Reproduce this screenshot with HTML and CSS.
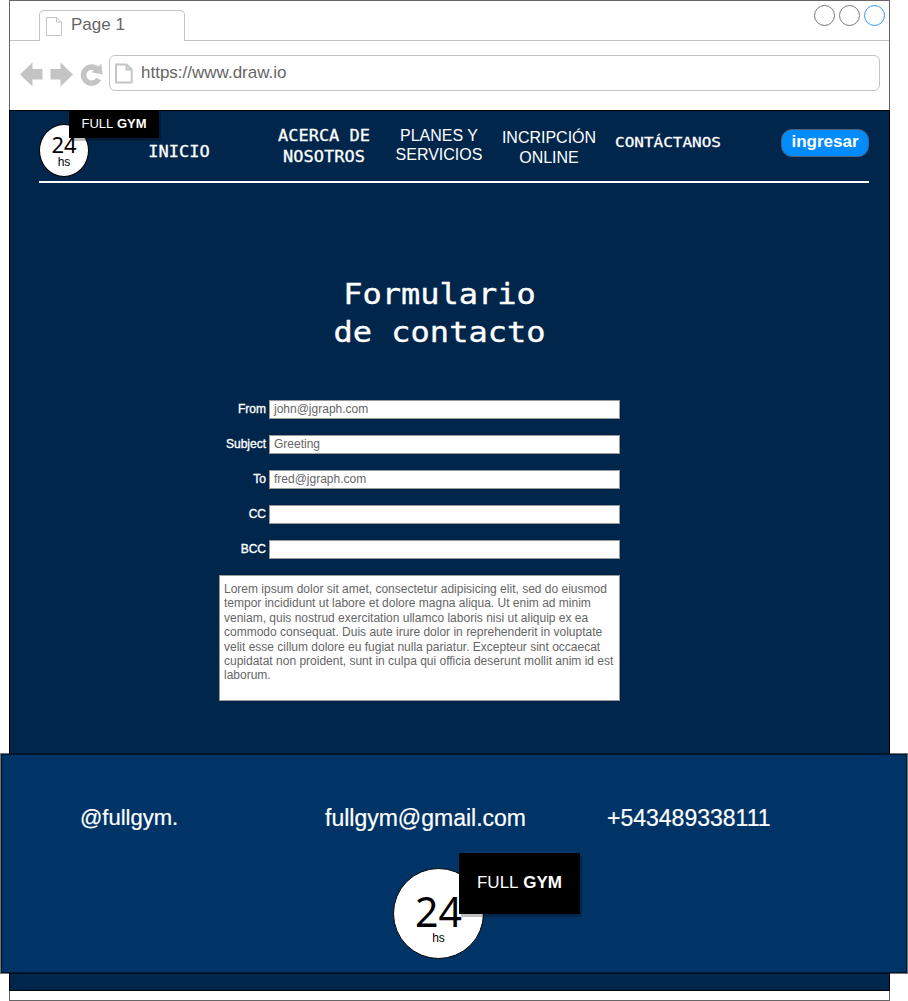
FILE: index.html
```html
<!DOCTYPE html>
<html lang="es">
<head>
<meta charset="utf-8">
<title>Full Gym - Contacto</title>
<link rel="stylesheet" href="styles.css">
</head>
<body>
<div class="window">
  <div class="tabstrip">
    <div class="tab">
      <svg class="tab-doc" width="18" height="21" viewBox="0 0 18 21"><path d="M1.5 1.5H11.5L16.5 6V19.5H1.5ZM11.5 1.5V6H16.5"/></svg>
      <span>Page 1</span>
    </div>
    <div class="controls"><i class="dot"></i><i class="dot"></i><i class="dot dot-blue"></i></div>
  </div>
  <div class="toolbar">
    <svg class="nav-icons" width="84" height="28" viewBox="0 0 84 28">
      <path class="solid" d="M0 14.500L12.500 2.500V9H22.500V19.500H12.500V26.500ZM53 14.500L40.500 2.500V9H30.500V19.500H40.500V26.500Z"/>
      <path class="reload" d="M77.500 9.700A8 8 0 1 0 78.600 19"/>
      <path class="solid" d="M81.300 3.800L82.600 14.500L71.500 12.300Z"/>
    </svg>
    <div class="address">
      <svg class="url-doc" width="19" height="22" viewBox="0 0 19 22"><path d="M1 1.500H11.500L16.700 6.500V19.500H1ZM11.500 1.500V6.500H16.700"/></svg>
      <span>https://www.draw.io</span>
    </div>
  </div>
  <div class="page">
    <header class="header">
      <div class="logo logo-small">
        <div class="circle"><span class="num">24</span><span class="hs">hs</span></div>
        <div class="tag">FULL&nbsp;<b>GYM</b></div>
      </div>
      <nav class="nav">
        <a class="mono inicio">INICIO</a>
        <a class="mono acerca">ACERCA DE<br>NOSOTROS</a>
        <a class="planes">PLANES Y<br>SERVICIOS</a>
        <a class="online">INCRIPCIÓN<br>ONLINE</a>
        <a class="mono contact">CONTÁCTANOS</a>
      </nav>
      <button class="login">ingresar</button>
    </header>
    <h1 class="title">Formulario<br>de contacto</h1>
    <form class="form">
      <label class="row"><span class="label">From</span><span class="field">john@jgraph.com</span></label>
      <label class="row"><span class="label">Subject</span><span class="field">Greeting</span></label>
      <label class="row"><span class="label">To</span><span class="field">fred@jgraph.com</span></label>
      <label class="row"><span class="label">CC</span><span class="field"></span></label>
      <label class="row"><span class="label">BCC</span><span class="field"></span></label>
      <div class="message">Lorem ipsum dolor sit amet, consectetur adipisicing elit, sed do eiusmod<br>tempor incididunt ut labore et dolore magna aliqua. Ut enim ad minim<br>veniam, quis nostrud exercitation ullamco laboris nisi ut aliquip ex ea<br>commodo consequat. Duis aute irure dolor in reprehenderit in voluptate<br>velit esse cillum dolore eu fugiat nulla pariatur. Excepteur sint occaecat<br>cupidatat non proident, sunt in culpa qui officia deserunt mollit anim id est<br>laborum.</div>
    </form>
    <footer class="footer">
      <div class="contacts">
        <span class="insta">@fullgym.</span>
        <span class="mail">fullgym@gmail.com</span>
        <span class="phone">+543489338111</span>
      </div>
      <div class="logo logo-big">
        <div class="circle"><span class="num">24</span><span class="hs">hs</span></div>
        <div class="tag">FULL&nbsp;<b>GYM</b></div>
      </div>
    </footer>
  </div>
</div>
</body>
</html>
```
FILE: styles.css
```css
* { box-sizing: border-box; }
body {
  margin: 0;
  width: 908px;
  height: 1001px;
  overflow: hidden;
  background: #fff;
  font-family: "Liberation Sans", Arial, sans-serif;
}
svg { display: block; flex: none; }
.window {
  width: 881px;
  height: 1001px;
  margin-left: 9px;
  border: 1px solid #666;
}

/* Browser chrome */
.tabstrip {
  display: flex;
  justify-content: space-between;
  height: 40px;
  padding: 9px 4px 0 29px;
  border-bottom: 1px solid #c4c4c4;
}
.tab {
  display: flex;
  width: 146px;
  height: 31px;
  padding: 5px 0 0 5px;
  gap: 8px;
  border: 1px solid #c4c4c4;
  border-bottom: 0;
  border-radius: 5px 5px 0 0;
  background: #fff;
  color: #666;
  font-size: 17px;
  line-height: 18px;
}
.tab-doc path { fill: none; stroke: #c4c4c4; stroke-width: 1; }
.controls { display: flex; gap: 4px; margin-top: -5px; }
.dot { width: 21px; height: 21px; border: 1px solid #777; border-radius: 50%; }
.dot-blue { border-color: #2d9bff; }
.toolbar {
  display: flex;
  height: 69px;
  padding: 14px 9px 0 10px;
}
.nav-icons { margin: 5px 5px 0 0; }
.solid { fill: #c4c4c4; }
.reload { fill: none; stroke: #c4c4c4; stroke-width: 5.5; }
.address {
  display: flex;
  flex: 1;
  height: 36px;
  padding: 7px 0 0 5px;
  gap: 7px;
  border: 1px solid #c4c4c4;
  border-radius: 6px;
  color: #666;
  font-size: 17px;
  line-height: 20px;
}
.url-doc path { fill: none; stroke: #c4c4c4; stroke-width: 1.9; }

/* Page */
.page {
  width: 881px;
  height: 881px;
  margin-left: -1px;
  border: 1px solid #000;
  background: #00264c;
  color: #fff;
}
.header {
  display: flex;
  align-items: flex-start;
  width: 830px;
  height: 72px;
  margin-left: 29px;
  border-bottom: 2px solid #fff;
}
.logo { position: relative; flex: none; }
.circle {
  display: flex;
  flex-direction: column;
  align-items: center;
  border: 1px solid #000;
  border-radius: 50%;
  background: #fff;
  color: #000;
}
.num { font-family: "Noto Sans", sans-serif; }
.hs { font-size: 12px; line-height: 14px; }
.tag {
  position: absolute;
  display: flex;
  justify-content: center;
  background: #000;
  color: #fff;
  box-shadow: 2px 3px 0 rgba(0, 0, 0, .25);
}
.logo-small { width: 50px; }
.logo-small .circle { height: 53px; margin-top: 13px; }
.logo-small .num { margin-top: 11px; font-size: 22px; line-height: 17px; }
.logo-small .hs { margin-top: 2px; }
.logo-small .tag { left: 30px; top: -1px; width: 90px; height: 28px; padding-top: 6px; font-size: 13px; line-height: 16px; }
.nav { display: flex; align-items: flex-start; width: 692px; text-align: center; font-size: 16px; white-space: nowrap; }
.mono {
  font-family: "DejaVu Sans Mono", monospace;
  font-size: 17px;
  line-height: 24px;
  transform: scaleY(.88);
  -webkit-text-stroke: .3px #fff;
}
.inicio { width: 62px; margin: 29px 0 0 59px; }
.acerca { width: 94px; margin: 11px 0 0 67px; }
.planes { width: 88px; margin: 15px 0 0 24px; line-height: 19px; }
.online { width: 96px; margin: 17px 0 0 18px; line-height: 20px; }
.contact { width: 108px; margin: 20px 0 0 17px; font-size: 16px; }
.login {
  width: 88px;
  height: 28px;
  padding: 0 0 2px;
  margin-top: 18px;
  border: 1px solid #49637c;
  border-radius: 11px;
  background: #008cff;
  color: #fff;
  font: bold 17px/20px "Liberation Sans", Arial, sans-serif;
}
.title {
  width: 861px;
  height: 76px;
  margin: 93px 0 0 -1px;
  text-align: center;
  font: 32px/43.7px "DejaVu Sans Mono", monospace;
  transform: scaleY(.87);
  transform-origin: 0 0;
  -webkit-text-stroke: .4px #fff;
}
.form { width: 401px; margin: 48px 0 0 209px; font-size: 12px; }
.row { display: flex; height: 19px; margin-bottom: 16px; }
.label { width: 47px; margin-right: 3px; text-align: right; line-height: 18px; -webkit-text-stroke: .35px #fff; }
.field {
  flex: 1;
  padding-left: 4px;
  border: 1px solid #999;
  background: #fff;
  color: #666;
  line-height: 16px;
}
.message {
  height: 126px;
  padding: 6px 4px;
  border: 1px solid #999;
  background: #fff;
  color: #666;
  line-height: 14.4px;
  white-space: nowrap;
}

/* Footer */
.footer {
  height: 219px;
  margin: 53px -18px 0 -9px;
  background: #036;
  box-shadow: 0 0 0 1px rgba(0, 0, 0, .55), inset 0 0 0 1px rgba(0, 0, 0, .55);
}
.contacts { display: flex; height: 114px; padding: 50px 0 0 79px; font-size: 23px; line-height: 28px; -webkit-text-stroke: .2px #fff; }
.insta { width: 245px; font-size: 22px; }
.mail { width: 282px; }
.logo-big { width: 91px; margin-left: 392px; }
.logo-big .circle { height: 91px; }
.logo-big .num { margin-top: 26px; font-size: 41px; line-height: 32px; }
.logo-big .hs { margin-top: 4px; }
.logo-big .tag { left: 66px; top: -15px; width: 121px; height: 61px; padding-top: 20px; font-size: 17px; line-height: 20px; }
```
